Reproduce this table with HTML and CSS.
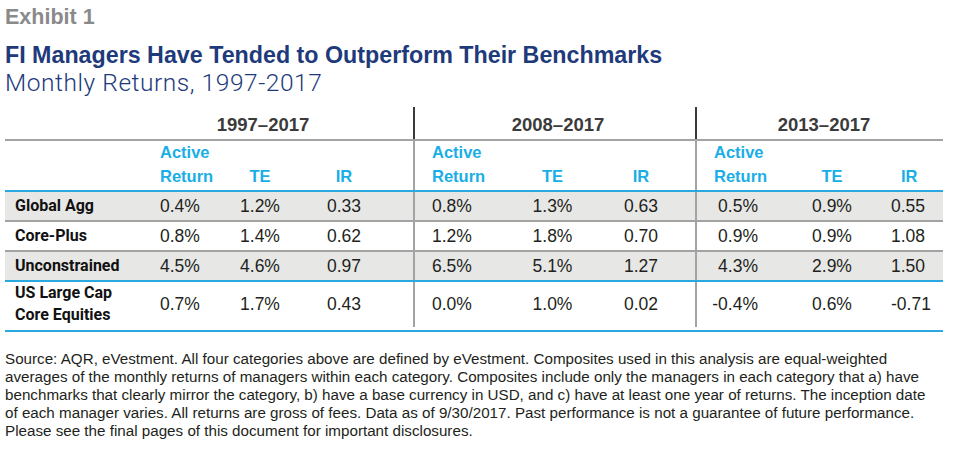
FILE: index.html
```html
<!DOCTYPE html>
<html lang="en">
<head>
<meta charset="utf-8">
<title>Exhibit 1</title>
<link rel="stylesheet" href="styles.css">
</head>
<body>
<div class="page">
  <div class="exhibit">Exhibit 1</div>
  <h1 class="title">FI Managers Have Tended to Outperform Their Benchmarks</h1>
  <div class="subtitle">Monthly Returns, 1997-2017</div>

  <div class="table">
    <div class="row row-years">
      <div class="cell"></div>
      <div class="cell year g1">1997–2017</div>
      <div class="cell year g2">2008–2017</div>
      <div class="cell year g3">2013–2017</div>
    </div>

    <div class="row row-head">
      <div class="cell label"></div>
      <div class="cell c1a">Active<br>Return</div>
      <div class="cell c1te">TE</div>
      <div class="cell c1ir">IR</div>
      <div class="cell c2a">Active<br>Return</div>
      <div class="cell c2te">TE</div>
      <div class="cell c2ir">IR</div>
      <div class="cell c3a">Active<br>Return</div>
      <div class="cell c3te">TE</div>
      <div class="cell c3ir">IR</div>
    </div>

    <div class="row row-data shaded">
      <div class="cell label">Global Agg</div>
      <div class="cell c1a">0.4%</div>
      <div class="cell c1te">1.2%</div>
      <div class="cell c1ir">0.33</div>
      <div class="cell c2a">0.8%</div>
      <div class="cell c2te">1.3%</div>
      <div class="cell c2ir">0.63</div>
      <div class="cell c3a">0.5%</div>
      <div class="cell c3te">0.9%</div>
      <div class="cell c3ir">0.55</div>
    </div>

    <div class="row row-data">
      <div class="cell label">Core-Plus</div>
      <div class="cell c1a">0.8%</div>
      <div class="cell c1te">1.4%</div>
      <div class="cell c1ir">0.62</div>
      <div class="cell c2a">1.2%</div>
      <div class="cell c2te">1.8%</div>
      <div class="cell c2ir">0.70</div>
      <div class="cell c3a">0.9%</div>
      <div class="cell c3te">0.9%</div>
      <div class="cell c3ir">1.08</div>
    </div>

    <div class="row row-data shaded blue-bottom">
      <div class="cell label">Unconstrained</div>
      <div class="cell c1a">4.5%</div>
      <div class="cell c1te">4.6%</div>
      <div class="cell c1ir">0.97</div>
      <div class="cell c2a">6.5%</div>
      <div class="cell c2te">5.1%</div>
      <div class="cell c2ir">1.27</div>
      <div class="cell c3a">4.3%</div>
      <div class="cell c3te">2.9%</div>
      <div class="cell c3ir">1.50</div>
    </div>

    <div class="row row-data row-tall blue-bottom">
      <div class="cell label">US Large Cap<br>Core Equities</div>
      <div class="cell c1a">0.7%</div>
      <div class="cell c1te">1.7%</div>
      <div class="cell c1ir">0.43</div>
      <div class="cell c2a">0.0%</div>
      <div class="cell c2te">1.0%</div>
      <div class="cell c2ir">0.02</div>
      <div class="cell c3a">-0.4%</div>
      <div class="cell c3te">0.6%</div>
      <div class="cell c3ir">-0.71</div>
    </div>
  </div>

  <p class="notes">Source: AQR, eVestment. All four categories above are defined by eVestment. Composites used in this analysis are equal-weighted<br>averages of the monthly returns of managers within each category. Composites include only the managers in each category that a) have<br>benchmarks that clearly mirror the category, b) have a base currency in USD, and c) have at least one year of returns. The inception date<br>of each manager varies. All returns are gross of fees. Data as of 9/30/2017. Past performance is not a guarantee of future performance.<br>Please see the final pages of this document for important disclosures.</p>
</div>
</body>
</html>
```

FILE: styles.css
```css
* {
  box-sizing: border-box;
  margin: 0;
  padding: 0;
}

body {
  margin: 0;
  background: #ffffff;
  font-family: "Liberation Sans", Arial, sans-serif;
  color: #231f20;
}

.page {
  width: 975px;
  padding: 4px 5px 0 5px;
}

.exhibit {
  font-size: 21.5px;
  line-height: 26px;
  font-weight: bold;
  color: #8a8a8a;
}

.title {
  margin-top: 12px;
  font-size: 23.25px;
  line-height: 27px;
  font-weight: bold;
  color: #1e3a7b;
}

.subtitle {
  font-family: Roboto, "Liberation Sans", sans-serif;
  font-weight: 300;
  font-size: 24.5px;
  line-height: 28px;
  letter-spacing: 0.55px;
  color: #1e3a7b;
}

/* ---------- table ---------- */
.table {
  margin-top: 10px;
  width: 938px;
}

.row {
  display: grid;
  grid-template-columns: 145px 75px 70px 118px 92px 95px 95px 80px 114px 54px;
}

.cell {
  display: flex;
  align-items: center;
}

.row-years {
  grid-template-columns: 145px 263px 282px 248px;
  height: 34px;
  border-bottom: 2px solid #a3a3a3;
}

.year {
  justify-content: center;
  padding-top: 4px;
  font-size: 18.5px;
  font-weight: bold;
  color: #3b3b3b;
}

.g1 { padding-right: 37px; }
.g2 { border-left: 2px solid #3a3a3a; padding-left: 6px; }
.g3 { border-left: 2px solid #3a3a3a; padding-left: 8px; }

.row-head {
  height: 51px;
  border-bottom: 2px solid #2aa9e1;
}

.row-head .cell {
  align-items: flex-end;
  padding-bottom: 2px;
  font-size: 16.5px;
  line-height: 23.4px;
  font-weight: bold;
  color: #1aaee6;
}

.row-data {
  height: 30px;
  border-bottom: 2px solid #a3a3a3;
  font-size: 17.5px;
}

.row-data.shaded {
  background: #e7e7e6;
}

.row-data.blue-bottom {
  border-bottom: 2px solid #2aa9e1;
}

.row-tall {
  height: 50px;
  padding-bottom: 3px;
}

.label {
  padding-left: 10px;
  padding-bottom: 1px;
  font-family: Roboto, "Liberation Sans", sans-serif;
  font-size: 16px;
  font-weight: bold;
  color: #111111;
}

.row-tall .label {
  line-height: 22px;
}

/* column alignment */
.c1a { justify-content: flex-start; padding-left: 10px; }
.c1te { justify-content: center; }
.c1ir { justify-content: center; padding-right: 20px; }

.c2a { justify-content: flex-start; padding-left: 17px; border-left: 2px solid #a3a3a3; }
.c2te { justify-content: center; }
.c2ir { justify-content: center; padding-right: 13px; }

.c3a { justify-content: flex-end; padding-right: 17px; border-left: 2px solid #a3a3a3; }
.c3te { justify-content: center; }
.c3ir { justify-content: flex-start; padding-left: 2px; }

.row-head .c3a { justify-content: flex-start; padding-left: 17px; padding-right: 0; }
.row-head .c3ir { padding-left: 12px; }

/* ---------- notes ---------- */
.notes {
  margin-top: 18px;
  font-size: 15.2px;
  line-height: 18px;
  white-space: nowrap;
  color: #231f20;
}
```
